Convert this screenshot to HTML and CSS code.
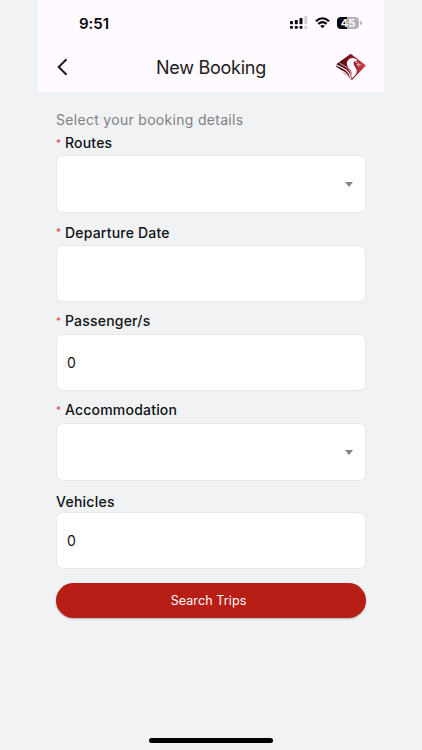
FILE: index.html
```html
<!DOCTYPE html>
<html lang="en">
<head>
<meta charset="utf-8">
<title>New Booking</title>
<link rel="stylesheet" href="styles.css">
</head>
<body>
<div class="screen">
  <header class="header">
    <div class="status">
      <span class="time">9:51</span>
      <div class="indicators">
        <svg class="signal" width="18" height="14" viewBox="0 0 18 14">
          <g fill="#09070b"><rect x="0" y="5" width="3" height="3.2" rx=".7"/><rect x="4.8" y="4" width="3" height="4.2" rx=".7"/><rect x="9.5" y="2" width="3" height="6.2" rx=".7"/><rect x="0" y="10" width="3" height="2.8" rx=".7"/><rect x="4.8" y="10" width="3" height="2.8" rx=".7"/><rect x="9.5" y="10" width="3" height="2.8" rx=".7"/></g>
          <g fill="#d2ced3"><rect x="14.3" y="0" width="3" height="8.2" rx=".7"/><rect x="14.3" y="10" width="3" height="2.8" rx=".7"/></g>
        </svg>
        <svg class="wifi" width="15" height="12" viewBox="0 0 15 12" fill="none" stroke="#09070b" stroke-width="2.1">
          <path d="M.9 4.3Q7.5-1.8 14.1 4.3M3.3 6.9Q7.5 3.2 11.7 6.9"/><path d="M5.2 8.9Q7.5 7 9.8 8.9L7.5 11.3Z" fill="#09070b" stroke="none"/>
        </svg>
        <div class="battery"><span>45</span></div>
      </div>
    </div>
    <nav class="nav">
      <svg class="back" width="11" height="18" viewBox="0 0 11 18" fill="none" stroke="#1d1b20" stroke-width="2"><path d="M9.5 1.2 1.7 9l7.8 7.8"/></svg>
      <h1>New Booking</h1>
      <svg class="logo" width="32" height="28" viewBox="0 0 32 28">
        <defs><linearGradient id="ruby" x1="0" y1="0" x2="1" y2="0"><stop offset="0" stop-color="#3a0c12"/><stop offset=".5" stop-color="#8b121e"/><stop offset="1" stop-color="#d64b51"/></linearGradient></defs>
        <path d="M15.7 .8 31 12.5 17 27 1 13.2 2 10.8Z" fill="url(#ruby)"/>
        <path d="M22.5 8.2C20.8 4.6 15.5 4 13 7.2 10.6 10.4 12.5 13.8 14.8 16.2 17.2 18.7 16.6 22 16.6 25.5 21.3 22.2 23.2 18.5 20.5 14.6 18.5 11.7 18.2 9.8 19.2 8.2Z" fill="#fefaff"/>
        <path d="M1.6 12 8 15.2Q14.8 18.5 15.8 25.5M0 14.3 6.5 17.8Q12.5 20.5 14 26" fill="none" stroke="#fefaff" stroke-width="1.1"/>
        <path d="M4.5 10.2 9.5 12.8Q15.5 16 16.5 23" fill="none" stroke="#fefaff" stroke-width=".7"/>
        <path d="M19.5 8.2 25.5 12 22 11.5 24 14" fill="none" stroke="#f5dce2" stroke-width=".7"/>
      </svg>
    </nav>
  </header>
  <main class="form">
    <p class="intro">Select your booking details</p>
    <label class="label"><i>*</i><span>Routes</span></label>
    <div class="field select tall"></div>
    <label class="label spaced"><i>*</i><span>Departure Date</span></label>
    <div class="field"></div>
    <label class="label spaced"><i>*</i><span>Passenger/s</span></label>
    <div class="field">0</div>
    <label class="label spaced"><i>*</i><span>Accommodation</span></label>
    <div class="field select tall"></div>
    <label class="label plain"><span>Vehicles</span></label>
    <div class="field">0</div>
    <button class="submit">Search Trips</button>
  </main>
  <div class="home"></div>
</div>
</body>
</html>
```
FILE: styles.css
```css
* { box-sizing: border-box; }
body { margin: 0; background: #f0f2f4; color: #101114; font-family: Inter, "Liberation Sans", sans-serif; }
.screen { width: 346px; height: 750px; margin-left: 38px; display: flex; flex-direction: column; }
.header { height: 92px; background: #fefaff; flex: none; }
.status { height: 46px; display: flex; align-items: center; justify-content: space-between; padding: 0 25px 0 41px; }
.time { font-size: 15px; line-height: 20px; font-weight: 600; letter-spacing: -.05px; color: #09070b; padding-top: 1px; }
.indicators { display: flex; align-items: center; }
.wifi { margin: 0 7px; }
.battery { position: relative; width: 22px; height: 12px; border-radius: 4px; background: linear-gradient(90deg, #09070b 47%, #b5b1b6 47%); color: #fff; font-size: 11px; line-height: 12px; font-weight: 700; text-align: center; }
.battery::after { content: ""; position: absolute; left: 23px; top: 4px; width: 1.5px; height: 4px; border-radius: 0 2px 2px 0; background: #b5b1b6; }
.nav { height: 42px; display: grid; grid-template-columns: 48px 1fr 48px; align-items: center; }
.back { margin-left: 19px; }
h1 { margin: 0; padding-top: 1px; text-align: center; font-size: 18px; line-height: 24px; font-weight: 400; letter-spacing: -.25px; color: #1d1b20; }
.logo { margin-left: -1px; }
.form { padding: 16px 18px 0; }
.intro { margin: 0; height: 23px; font-size: 14px; line-height: 23px; letter-spacing: .3px; color: #808184; }
.label { display: flex; height: 24px; font-size: 14px; line-height: 24px; font-weight: 500; letter-spacing: .2px; }
.label i { width: 9px; font-size: 10px; font-weight: 400; font-style: normal; color: #e5433f; }
.spaced { margin-top: 8px; line-height: 23px; }
.spaced ~ .spaced { line-height: 22px; }
.plain { margin-top: 9px; height: 22px; line-height: 23px; letter-spacing: .25px; }
.field { height: 57px; background: #fff; border: 1px solid #e7e8ea; border-radius: 7px; display: flex; align-items: center; padding: 0 12px 0 10px; font-size: 14px; }
.tall { height: 58px; }
.select { justify-content: flex-end; }
.select::after { content: ""; border: 4.5px solid transparent; border-top: 5px solid #858587; border-bottom: 0; }
.submit { display: block; width: 100%; height: 35px; margin-top: 14px; padding: 0 5px 0 0; border: 0; border-radius: 18px; background: #b71e15; box-shadow: 0 1px 2px #0004; color: #fff; font: 400 12.5px/35px Inter, sans-serif; letter-spacing: .1px; }
.home { width: 124px; height: 5px; flex: none; border-radius: 3px; background: #000; margin: auto auto 7px; }
```
